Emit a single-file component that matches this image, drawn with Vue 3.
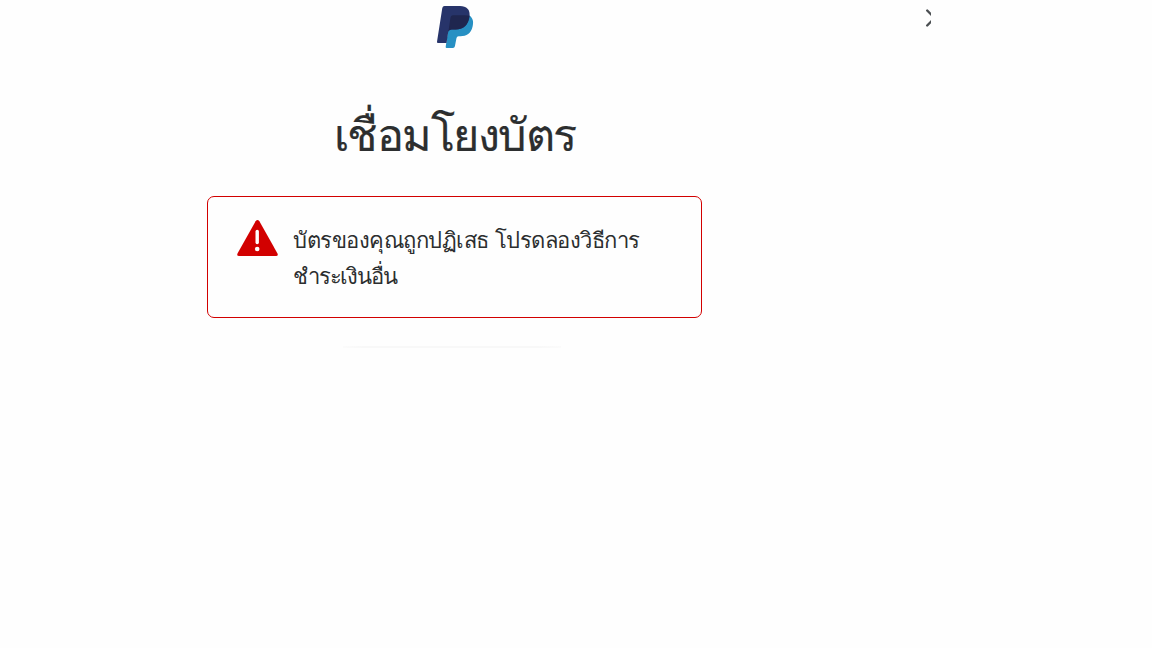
<template>
  <main class="page">
    <section class="sheet">
      <header class="topbar">
        <svg class="logo" width="38" height="43" viewBox="0 0 38 43" aria-label="PayPal">
          <path fill="#2790c3" d="M33.500 9.500C37 12 37.800 16 36.600 20.500C35 27.500 30.500 30.200 24.500 30.200H22.500Q20.900 30.200 20.500 32L18.900 40.300Q18.500 42 17 42H10.600Q9.500 42 9.700 40.800L14 11Z" />
          <path fill="#27346a" d="M8.500 0H24C30.500 0 34.500 3.500 33.500 10.500C32.500 19 27.500 23.500 19.500 23.500H15.500Q12.700 23.500 12.200 26L10.500 37H2Q0.800 37 1 35.700L6.300 2Q6.700 0 8.500 0Z" />
          <path fill="#1f264f" d="M33.500 9.800C32.500 19 27.500 23.500 19.500 23.500H15.500Q13.500 23.500 12.500 25L14.500 11.500Q14.800 9.500 16.700 9.300H27Q31 9 33.500 9.800Z" />
        </svg>
        <svg class="close" width="6" height="20" viewBox="0 0 6 20" aria-label="ปิด">
          <path d="M2.200 2.500L9.500 10L2.200 17.500" fill="none" stroke="#4b4f52" stroke-width="2.400" stroke-linecap="round" />
        </svg>
      </header>
      <h1 class="title">เชื่อมโยงบัตร</h1>
      <div class="alert" role="alert">
        <svg class="alert-icon" width="41" height="37" viewBox="0 0 41 37">
          <path fill="#d20000" d="M18.600 1.200Q20.500 -1.200 22.400 1.200L40.500 33.500Q41.500 36 39 36H2Q-0.500 36 0.500 33.500Z" />
          <path d="M20.200 11.500V22.500" stroke="#fff" stroke-width="3.400" stroke-linecap="round" />
          <circle cx="20.200" cy="29" r="2.300" fill="#fff" />
        </svg>
        <p class="message">
          <span v-for="line in message" :key="line">{{ line }}</span>
        </p>
      </div>
      <div class="divider"></div>
    </section>
  </main>
</template>

<script setup>
const message = ['บัตรของคุณถูกปฏิเสธ โปรดลองวิธีการ', 'ชำระเงินอื่น']
</script>

<style scoped>
.page {
  height: 648px;
  overflow: hidden;
  background: #fefefe;
  color: #2c2e2f;
  font-family: "DejaVu Sans", "Noto Sans", sans-serif;
}

.sheet {
  width: 931px;
}

.topbar {
  display: flex;
  justify-content: space-between;
  height: 50px;
  padding: 6px 0 0 436px;
  box-sizing: border-box;
}

.close {
  margin-top: 2px;
}

.title {
  width: 495px;
  height: 60px;
  margin: 56px 0 30px 207px;
  font-size: 45px;
  font-weight: 400;
  letter-spacing: -1.5px;
  line-height: 60px;
  text-align: center;
  -webkit-text-stroke: 0.2px #2c2e2f;
}

.alert {
  display: flex;
  width: 495px;
  height: 122px;
  margin-left: 207px;
  padding: 23px 29px;
  box-sizing: border-box;
  border: 1px solid #d20000;
  border-radius: 7px;
}

.message {
  display: flex;
  flex-direction: column;
  margin: 3px 0 0 15px;
  font-size: 22px;
  letter-spacing: -0.5px;
  line-height: 36px;
  white-space: nowrap;
}

.message span:last-child {
  letter-spacing: -1.2px;
}

.divider {
  width: 218px;
  height: 2px;
  margin: 28px 0 0 343px;
  background: linear-gradient(90deg, #fbfbfb, #f8f8f8 10%, #f8f8f8 90%, #fbfbfb);
}
</style>
